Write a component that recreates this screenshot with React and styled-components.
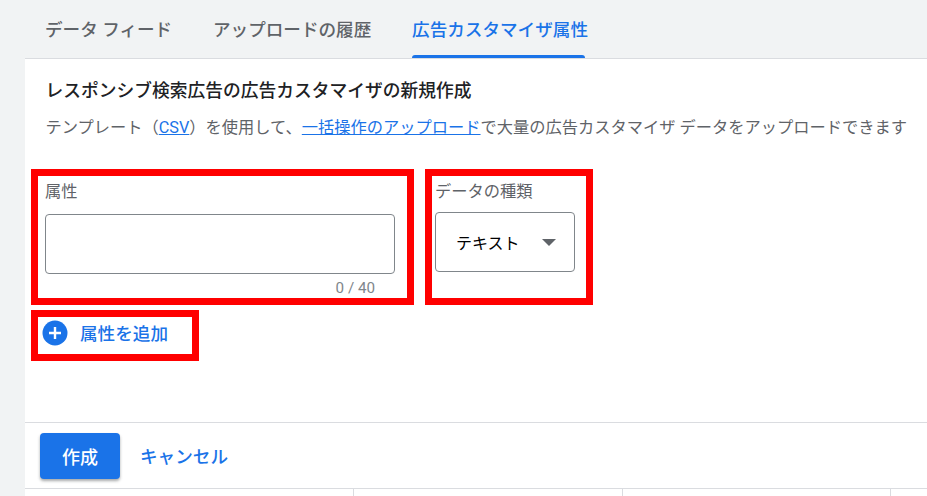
import React from "react";
import styled, { createGlobalStyle } from "styled-components";

const Global = createGlobalStyle`
  html, body { margin: 0; padding: 0; background: #f1f3f4; }
  body { font-family: Roboto, "Noto Sans CJK JP", sans-serif; overflow: hidden; }
  * { box-sizing: border-box; }
`;
const Page = styled.div`
  width: 927px; height: 496px; display: flex; flex-direction: column; overflow: hidden; background: #f1f3f4;
`;
const Tabs = styled.div`
  height: 58px; padding-left: 25px; display: flex; flex: none;
`;
const Tab = styled.div`
  height: 58px; padding: 0 20px; margin-right: 0.75px; position: relative; display: flex; align-items: center; padding-bottom: 1px;
  font-size: 17.6px; font-weight: 500; white-space: nowrap;
  color: ${p => (p.$active ? "#1a73e8" : "#5f6368")};
  ${p => p.$active && `&::after { content: ""; position: absolute; left: 20px; right: 23px; bottom: 0; height: 3px; background: #1a73e8; border-radius: 3px 3px 0 0; }`}
`;
const Panel = styled.div`
  margin-left: 25px; flex: 1; background: #fff; border-top: 1px solid #dadce0; display: flex; flex-direction: column; min-height: 0;
`;
const Body = styled.div`
  height: 363px; flex: none; padding: 21px 0 0 6px;
`;
const Title = styled.div`
  margin-left: 14.5px; font-size: 17.75px; line-height: 22px; font-weight: 500; color: #202124; white-space: nowrap;
`;
const Desc = styled.div`
  margin: 15px 0 0 14.5px; font-size: 16.25px; line-height: 22px; color: #5f6368; white-space: nowrap;
  a { color: #1a73e8; text-decoration: underline; }
`;
const Row = styled.div`
  display: flex; gap: 11px; margin-top: 30px;
`;
const Marked = styled.div`
  border: 7px solid #f00; flex: none;
  width: ${p => p.$w}px; height: ${p => p.$h}px;
`;
const AttrBox = styled(Marked)`
  padding: 0 7px;
`;
const FieldLabel = styled.div`
  font-size: 16.25px; line-height: 20px; color: #5f6368; margin-top: 6px;
`;
const Input = styled.div`
  width: 350px; height: 60px; margin-top: 12px; border: 1px solid #80868b; border-radius: 4px; background: #fff;
`;
const Counter = styled.div`
  font-size: 15.2px; line-height: 18px; color: #80868b; text-align: right; margin: 5px 25px 0 0;
`;
const TypeBox = styled(Marked)`
  padding: 0 3px;
`;
const Select = styled.div`
  width: 140px; height: 60px; margin-top: 10px; border: 1px solid #80868b; border-radius: 4px; display: flex; align-items: center; padding: 0 18px 0 20px; justify-content: space-between;
  font-size: 16px; color: #000;
`;
const Caret = styled.span`
  width: 0; height: 0; border-left: 7px solid transparent; border-right: 7px solid transparent; border-top: 7px solid #5f6368;
`;
const AddBox = styled(Marked)`
  margin-top: 5px; display: flex; align-items: center; gap: 12px; padding-left: 4px; padding-bottom: 6px;
  font-size: 17.6px; font-weight: 500; color: #1a73e8;
`;
const Footer = styled.div`
  height: 67px; flex: none; border-top: 1px solid #dadce0; border-bottom: 1px solid #dadce0; display: flex; align-items: center; padding-left: 15px;
`;
const Primary = styled.div`
  width: 80px; height: 46px; border-radius: 4px; background: #1a73e8; color: #fff; font-size: 18px; font-weight: 500; display: flex; align-items: center; justify-content: center;
  box-shadow: 0 2px 3px rgba(60,64,67,.45);
`;
const Cancel = styled.div`
  margin-left: 20px; font-size: 17.6px; font-weight: 500; color: #1a73e8;
`;
const Columns = styled.div`
  flex: 1; display: flex;
`;
const Col = styled.div`
  width: ${p => p.$w}px; border-right: 1px solid #dadce0; flex: none;
`;

export default function App() {
  return (
    <Page>
      <Global />
      <Tabs>
        <Tab>データ フィード</Tab>
        <Tab>アップロードの履歴</Tab>
        <Tab $active>広告カスタマイザ属性</Tab>
      </Tabs>
      <Panel>
        <Body>
          <Title>レスポンシブ検索広告の広告カスタマイザの新規作成</Title>
          <Desc>テンプレート（<a>CSV</a>）を使用して、<a>一括操作のアップロード</a>で大量の広告カスタマイザ データをアップロードできます</Desc>
          <Row>
            <AttrBox $w={383} $h={136}>
              <FieldLabel>属性</FieldLabel>
              <Input />
              <Counter>0 / 40</Counter>
            </AttrBox>
            <TypeBox $w={168} $h={136}>
              <FieldLabel>データの種類</FieldLabel>
              <Select>テキスト<Caret /></Select>
            </TypeBox>
          </Row>
          <AddBox $w={168} $h={51}>
            <svg width="26" height="26" viewBox="0 0 26 26">
              <circle cx="13" cy="13" r="12.5" fill="#1a73e8" />
              <path d="M13 7v12M7 13h12" stroke="#fff" strokeWidth="2.4" />
            </svg>
            属性を追加
          </AddBox>
        </Body>
        <Footer>
          <Primary>作成</Primary>
          <Cancel>キャンセル</Cancel>
        </Footer>
        <Columns>
          <Col $w={329} />
          <Col $w={269} />
          <Col $w={268} />
        </Columns>
      </Panel>
    </Page>
  );
}
